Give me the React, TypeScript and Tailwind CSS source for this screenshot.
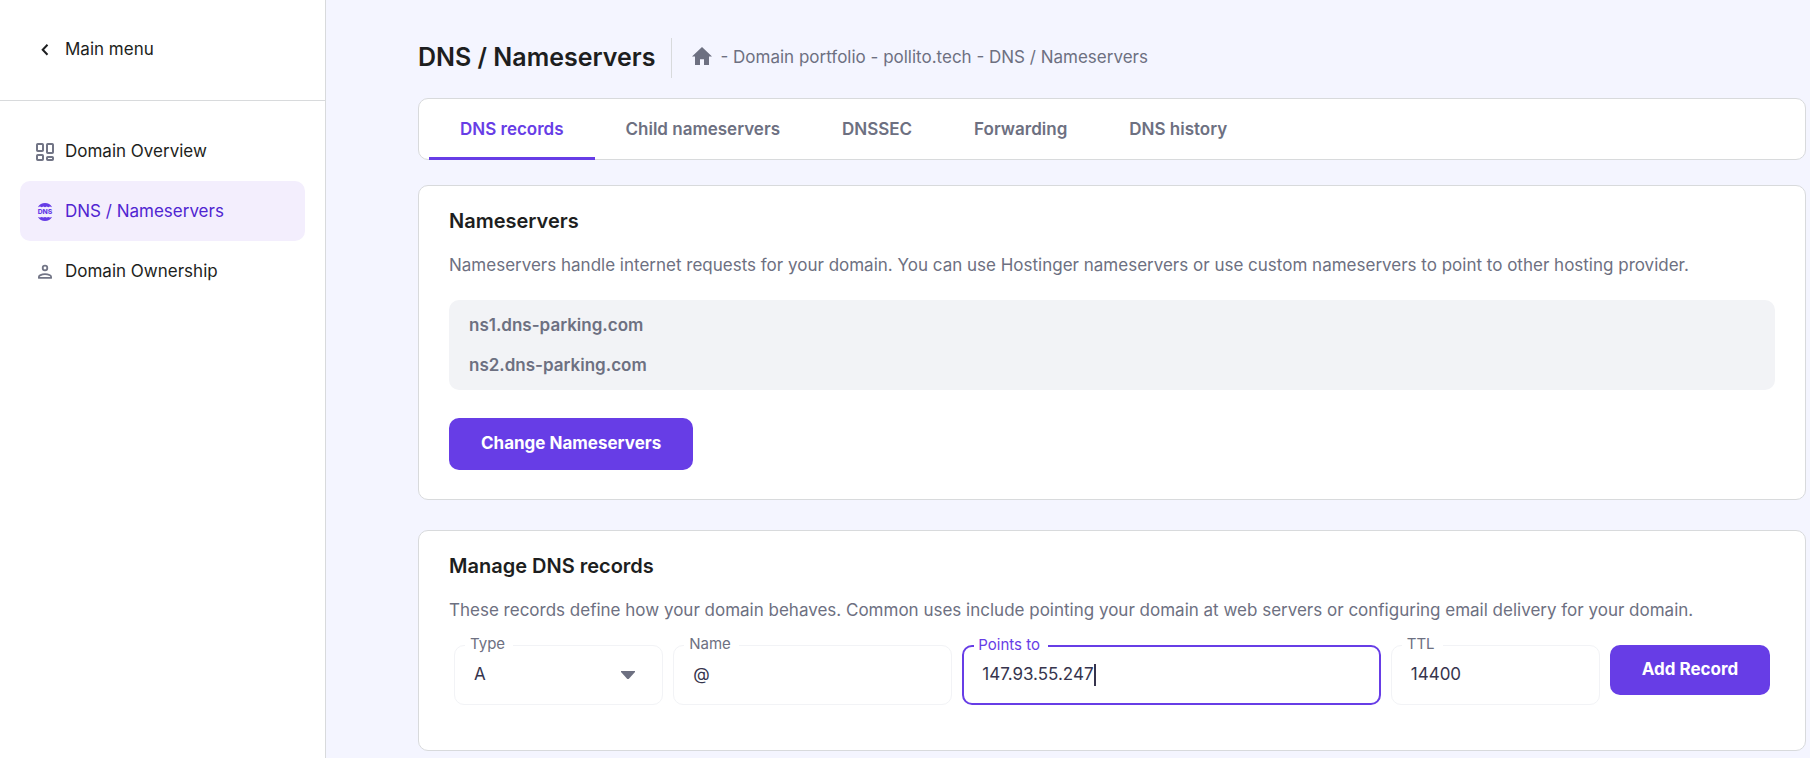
import { useState } from "react";
import type { ReactNode } from "react";

function ChevronLeftIcon() {
  return (
    <svg viewBox="0 0 20 20" className="size-5 shrink-0" fill="none" stroke="currentColor" strokeWidth="2" aria-hidden="true">
      <path d="M12.500 4.700 7.700 9.700l4.800 5" />
    </svg>
  );
}

function DashboardIcon() {
  return (
    <svg viewBox="0 0 20 20" className="size-5 shrink-0" fill="none" stroke="currentColor" strokeWidth="2" aria-hidden="true">
      <rect x="2" y="2" width="6" height="7" rx="0.800" />
      <rect x="12" y="2" width="6" height="9" rx="0.800" />
      <rect x="2" y="13" width="6" height="5" rx="0.800" />
      <rect x="12" y="15" width="6" height="3" rx="0.800" />
    </svg>
  );
}

function DnsIcon() {
  return (
    <svg viewBox="0 0 20 20" className="size-5 shrink-0" fill="currentColor" aria-hidden="true">
      <path d="M2.900 5.200C4.400 2.600 7 1.100 10 1.100s5.600 1.500 7.100 4.100l-2.100-.7-1.700.7-1.600-.7-1.700.7-1.700-.7-1.600.7-1.700-.7z" />
      <path d="M2.900 14.900C4.400 17.500 7 19 10 19s5.600-1.500 7.100-4.100l-2.100.7-1.700-.7-1.600.7-1.700-.7-1.700.7-1.600-.7-1.700.7z" />
      <text x="10" y="12.400" textAnchor="middle" fontSize="6.800" fontWeight="800">
        DNS
      </text>
    </svg>
  );
}

function PersonIcon() {
  return (
    <svg viewBox="0 0 20 20" className="size-5 shrink-0" fill="none" stroke="currentColor" strokeWidth="1.800" aria-hidden="true">
      <circle cx="10" cy="6" r="2.300" />
      <path d="M3.900 15.900v-.9c0-.8.4-1.400 1.100-1.700 1.600-.7 3.300-1.100 5-1.100s3.400.4 5 1.100c.7.300 1.100.9 1.100 1.700v.9z" strokeLinejoin="round" />
    </svg>
  );
}

function HomeIcon() {
  return (
    <svg viewBox="0 0 20 18" className="h-[18px] w-5" fill="currentColor" aria-hidden="true">
      <path d="M10 0 0 9.400h3V18h5v-5.800h4V18h5V9.400h3z" />
    </svg>
  );
}

const navItems = [
  { label: "Domain Overview", icon: <DashboardIcon />, active: false },
  { label: "DNS / Nameservers", icon: <DnsIcon />, active: true },
  { label: "Domain Ownership", icon: <PersonIcon />, active: false },
];

const tabs = ["DNS records", "Child nameservers", "DNSSEC", "Forwarding", "DNS history"];

function Sidebar() {
  return (
    <aside className="w-[326px] shrink-0 border-r border-[#d8dadc] bg-white text-[17px] text-[#1d1e20]">
      <div className="flex h-[101px] items-center border-b border-[#d8dadc] px-[35px]">
        <a href="#main-menu" className="flex items-center gap-[10px]">
          <ChevronLeftIcon />
          Main menu
        </a>
      </div>
      <nav className="px-5 py-5">
        {navItems.map((item) => (
          <a
            key={item.label}
            href="#nav"
            aria-current={item.active ? "page" : undefined}
            className={
              item.active
                ? "flex h-[60px] items-center gap-[10px] rounded-[10px] bg-[#f3eefd] px-[15px] pt-px text-[#5025d1]"
                : "flex h-[60px] items-center gap-[10px] rounded-[10px] px-[15px] pt-px"
            }
          >
            <span className={item.active ? "text-[#673de6]" : "text-[#727586]"}>{item.icon}</span>
            {item.label}
          </a>
        ))}
      </nav>
    </aside>
  );
}

function Card({ title, text, children }: { title: string; text: string; children: ReactNode }) {
  return (
    <section className="rounded-[10px] border border-[#d8dadc] bg-white px-[30px] pt-[19px]">
      <h2 className="text-[20px] leading-8 font-semibold text-[#1d1e20]">{title}</h2>
      <p className="mt-4 text-[17px] leading-6">{text}</p>
      {children}
    </section>
  );
}

function Field({ id, label, focused = false, children }: { id: string; label: string; focused?: boolean; children: ReactNode }) {
  return (
    <div
      className={
        focused
          ? "relative flex h-[60px] items-center rounded-[10px] border-2 border-[#673de6] px-[18px] text-[#36344d]"
          : "relative flex h-[60px] items-center rounded-[10px] border border-[#f2f3f6] px-[19px] text-[#36344d]"
      }
    >
      <label
        htmlFor={id}
        className={
          focused
            ? "absolute -top-3 left-[10px] bg-white pr-2 pl-1 text-[15px] leading-5 text-[#673de6]"
            : "absolute -top-3 left-[10px] bg-white pr-2 pl-[5px] text-[15px] leading-5 text-[#6d7081]"
        }
      >
        {label}
      </label>
      {children}
    </div>
  );
}

export default function App() {
  const [type, setType] = useState("A");
  const [name, setName] = useState("@");
  const [target, setTarget] = useState("147.93.55.247");
  const [ttl, setTtl] = useState("14400");

  return (
    <div className="flex min-h-screen bg-[#f4f5ff] font-['Inter',sans-serif] text-[#6d7081]">
      <Sidebar />
      <main className="min-w-0 flex-1 pt-[38px] pr-1 pb-[6px] pl-[92px]">
        <header className="flex h-10 items-center">
          <h1 className="pr-4 text-[25px] font-semibold text-[#1d1e20]">DNS / Nameservers</h1>
          <div className="flex h-10 items-center gap-2 border-l border-[#d8dadc] pl-5 text-[17px]">
            <a href="#home" aria-label="Home" className="pb-1">
              <HomeIcon />
            </a>
            <span>- Domain portfolio - pollito.tech - DNS / Nameservers</span>
          </div>
        </header>

        <div role="tablist" className="mt-5 flex h-[62px] rounded-[10px] border border-[#d8dadc] bg-white px-[10px]">
          {tabs.map((tab, i) => (
            <button
              key={tab}
              type="button"
              role="tab"
              aria-selected={i === 0}
              className={
                i === 0
                  ? "-mb-px border-b-3 border-[#673de6] px-[31px] pt-[3px] text-[17px] font-semibold text-[#673de6]"
                  : "-mb-px border-b-3 border-transparent px-[31px] pt-[3px] text-[17px] font-semibold"
              }
            >
              {tab}
            </button>
          ))}
        </div>

        <div className="mt-[25px] flex flex-col gap-[30px]">
          <Card
            title="Nameservers"
            text="Nameservers handle internet requests for your domain. You can use Hostinger nameservers or use custom nameservers to point to other hosting provider."
          >
            <ul className="mt-[23px] rounded-[10px] bg-[#f2f3f6] px-5 py-[5px] text-[17px] leading-10 font-semibold">
              <li>ns1.dns-parking.com</li>
              <li>ns2.dns-parking.com</li>
            </ul>
            <button type="button" className="mt-7 mb-[29px] h-[52px] rounded-[10px] bg-[#673de6] px-8 text-[17px] font-bold text-white">
              Change Nameservers
            </button>
          </Card>

          <Card
            title="Manage DNS records"
            text="These records define how your domain behaves. Common uses include pointing your domain at web servers or configuring email delivery for your domain."
          >
            <form className="mt-[23px] mb-[45px] grid grid-cols-[3fr_4fr_6fr_3fr_160px] items-start gap-[10px] px-[5px] text-[17px]">
              <Field id="record-type" label="Type">
                <select
                  id="record-type"
                  value={type}
                  onChange={(e) => setType(e.target.value)}
                  className="w-full appearance-none bg-transparent outline-none"
                >
                  <option>A</option>
                </select>
                <svg viewBox="0 0 14 8" className="pointer-events-none absolute right-[27px] h-2 w-[14px]" fill="#6d7081" aria-hidden="true">
                  <path d="M0 0h14v1L7.700 8H6.300L0 1z" />
                </svg>
              </Field>
              <Field id="record-name" label="Name">
                <input id="record-name" value={name} onChange={(e) => setName(e.target.value)} className="w-full bg-transparent outline-none" />
              </Field>
              <Field id="record-target" label="Points to" focused>
                <input
                  id="record-target"
                  value={target}
                  onChange={(e) => setTarget(e.target.value)}
                  className="max-w-full bg-transparent caret-transparent outline-none [field-sizing:content]"
                />
                <span className="h-[22px] w-[2px] bg-[#36344d]" />
              </Field>
              <Field id="record-ttl" label="TTL">
                <input id="record-ttl" value={ttl} onChange={(e) => setTtl(e.target.value)} className="w-full bg-transparent outline-none" />
              </Field>
              <button type="button" className="h-[50px] rounded-[10px] bg-[#673de6] text-[17px] font-bold text-white">
                Add Record
              </button>
            </form>
          </Card>
        </div>
      </main>
    </div>
  );
}
